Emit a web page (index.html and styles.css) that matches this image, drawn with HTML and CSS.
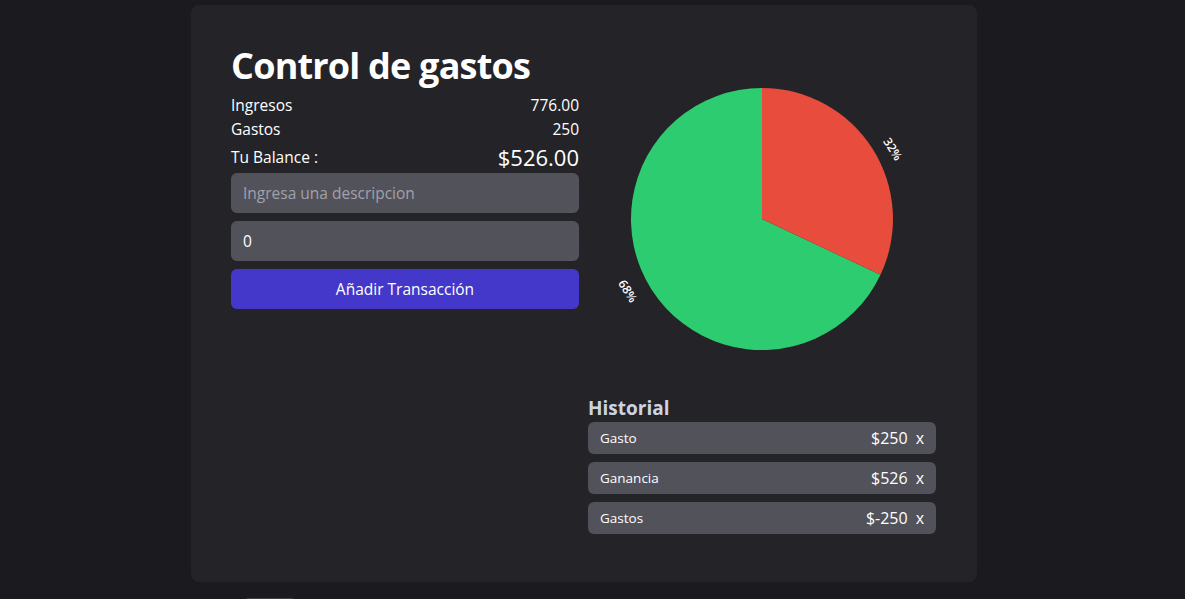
FILE: index.html
```html
<!DOCTYPE html>
<html lang="es">
<head>
<meta charset="utf-8">
<title>Control de gastos</title>
<link rel="stylesheet" href="styles.css">
</head>
<body>
<div class="page">
  <main class="card">
    <section class="col-left">
      <h1 class="title">Control de gastos</h1>
      <div class="stat-row"><span>Ingresos</span><span>776.00</span></div>
      <div class="stat-row"><span>Gastos</span><span>250</span></div>
      <div class="balance-row"><span>Tu Balance :</span><span class="balance">$526.00</span></div>
      <form class="form">
        <input class="field" type="text" placeholder="Ingresa una descripcion">
        <input class="field" type="text" value="0">
        <button class="btn" type="button">Añadir Transacción</button>
      </form>
    </section>
    <section class="col-right">
      <svg class="chart" width="348" height="350" viewBox="0 0 348 350">
        <path d="M174,174 L292.5,229.8 A131,131 0 1 1 174,43 Z" fill="#2ecc71"/>
        <path d="M174,174 L174,43 A131,131 0 0 1 292.5,229.8 Z" fill="#e74c3c"/>
        <text class="pie-label" x="305" y="104" transform="rotate(58 305 104)" text-anchor="middle" dominant-baseline="central">32%</text>
        <text class="pie-label" x="40" y="246" transform="rotate(58 40 246)" text-anchor="middle" dominant-baseline="central">68%</text>
      </svg>
      <h2 class="hist-title">Historial</h2>
      <ul class="hist-list">
        <li class="hist-item"><span class="hist-name">Gasto</span><span class="hist-right"><span class="hist-amount">$250</span><span class="hist-x">x</span></span></li>
        <li class="hist-item"><span class="hist-name">Ganancia</span><span class="hist-right"><span class="hist-amount">$526</span><span class="hist-x">x</span></span></li>
        <li class="hist-item"><span class="hist-name">Gastos</span><span class="hist-right"><span class="hist-amount">$-250</span><span class="hist-x">x</span></span></li>
      </ul>
    </section>
  </main>
  <div class="stub"></div>
</div>
</body>
</html>
```

FILE: styles.css
```css
* { box-sizing: border-box; }
html, body {
  margin: 0;
  padding: 0;
  background: #1b1b1f;
  overflow: hidden;
}
body {
  font-family: "Open Sans", "Noto Sans", sans-serif;
  color: #ffffff;
  height: 599px;
}
.page {
  padding: 5px 208px 0 191px;
}
.card {
  background: #242428;
  border-radius: 8px;
  padding: 40px 40px 48px 40px;
  display: grid;
  grid-template-columns: 348px 348px;
  column-gap: 9px;
  align-items: start;
}
.col-left {
  display: flex;
  flex-direction: column;
}
.title {
  margin: 1px 0 7px;
  font-size: 36px;
  line-height: 40px;
  font-weight: 700;
  letter-spacing: -0.8px;
}
.stat-row {
  display: flex;
  justify-content: space-between;
  font-size: 15.5px;
  line-height: 24px;
}
.balance-row {
  display: flex;
  justify-content: space-between;
  align-items: center;
  font-size: 15.5px;
  height: 32px;
}
.balance {
  font-size: 22px;
  line-height: 32px;
}
.form {
  display: flex;
  flex-direction: column;
  gap: 8px;
  margin: 0;
}
.field {
  height: 40px;
  border: none;
  border-radius: 6px;
  background: #52525b;
  color: #ffffff;
  font-family: inherit;
  font-size: 15.5px;
  padding: 0 12px;
  outline: none;
}
.field::placeholder { color: #a1a1aa; }
.btn {
  height: 40px;
  border: none;
  border-radius: 6px;
  background: #4338ca;
  color: #ffffff;
  font-family: inherit;
  font-size: 15.5px;
}
.col-right {
  display: flex;
  flex-direction: column;
}
.chart { display: block; }
.pie-label {
  fill: #ffffff;
  font-family: "Open Sans", sans-serif;
  font-size: 12px;
  font-weight: 600;
}
.hist-title {
  margin: 0;
  font-size: 19px;
  line-height: 27px;
  font-weight: 700;
  color: #cbd5e1;
}
.hist-list {
  list-style: none;
  margin: 0;
  padding: 0;
  display: flex;
  flex-direction: column;
  gap: 8px;
}
.hist-item {
  height: 32px;
  background: #52525b;
  border-radius: 6px;
  display: flex;
  align-items: center;
  justify-content: space-between;
  padding: 0 12px;
}
.hist-name { font-size: 13.5px; }
.hist-right {
  display: flex;
  align-items: center;
  gap: 8px;
  font-size: 16px;
}
.stub {
  width: 48px;
  height: 2px;
  margin: 16px 0 0 55px;
  background: #3f3f46;
  border-radius: 2px 2px 0 0;
}
```
